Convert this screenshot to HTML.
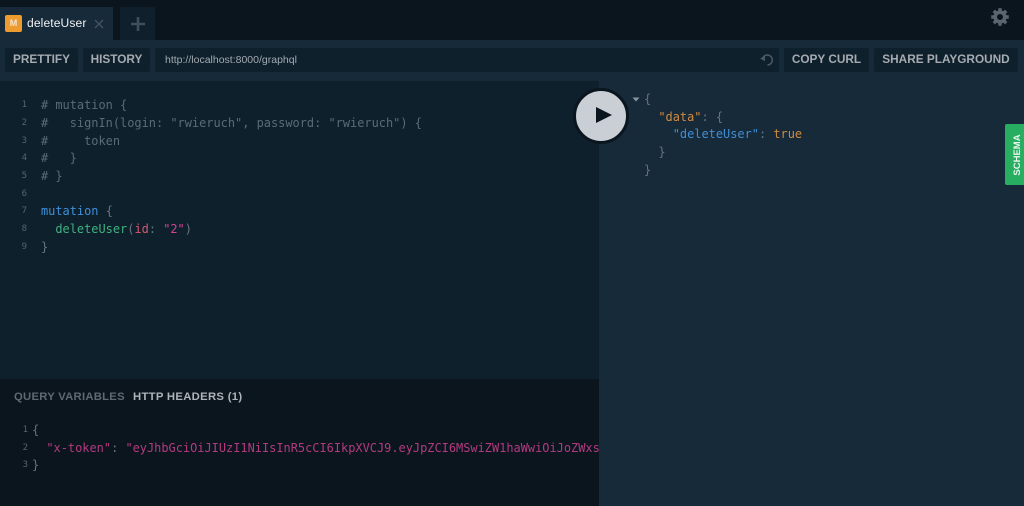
<!DOCTYPE html>
<html>
<head>
<meta charset="utf-8">
<style>
html,body{margin:0;padding:0;width:1024px;height:506px;overflow:hidden;background:#172a3a}
body{position:relative;font-family:"Liberation Sans",sans-serif}
.a{position:absolute}
.btn{position:absolute;top:48px;height:24px;background:#0f202d;border-radius:2px;color:#a5abb0;font-weight:700;font-size:11.8px;line-height:23px;text-align:center;white-space:nowrap}
.code{position:absolute;font-family:"DejaVu Sans Mono","Liberation Mono",monospace;font-size:11.95px;line-height:17.65px;white-space:pre;color:#6e7c87}
.ln{position:absolute;font-family:"DejaVu Sans Mono","Liberation Mono",monospace;font-size:9px;line-height:17.65px;color:#56636d;text-align:right;white-space:pre}
.c{color:#5a6b77}
.kw{color:#3f8fd6}
.fn{color:#3fb27f}
.at{color:#d6566e}
.st{color:#d64292}
.br{color:#66747f}
</style>
</head>
<body>
<!-- top bar -->
<div class="a" style="left:0;top:0;width:1024px;height:40px;background:#0b151e"></div>
<div class="a" style="left:0;top:7px;width:113px;height:33px;background:#172a3a"></div>
<div class="a" style="left:120px;top:7px;width:35px;height:33px;background:#0f1f2c"></div>
<div class="a" style="left:5px;top:15px;width:17px;height:17px;background:#ed9a2f;border-radius:2px;color:#f5e6cf;font-size:9px;font-weight:700;line-height:17px;text-align:center">M</div>
<div class="a" style="left:27px;top:15px;color:#eef1f3;font-size:12.1px;line-height:17px;letter-spacing:.1px">deleteUser</div>
<svg class="a" style="left:93px;top:18px" width="12" height="12" viewBox="0 0 12 12"><path d="M2 2L10 10M10 2L2 10" stroke="#46545f" stroke-width="1.3" fill="none"/></svg>
<svg class="a" style="left:130px;top:16px" width="16" height="16" viewBox="0 0 16 16"><path d="M8 1V15M1 8H15" stroke="#3f4e5a" stroke-width="2.6" fill="none"/></svg>
<!-- gear -->
<svg class="a" style="left:990px;top:7px" width="20" height="20" viewBox="0 0 20 20">
<g fill="#5a6570"><circle cx="10" cy="10" r="6.6"/>
<g stroke="#5a6570" stroke-width="3.4"><path d="M10 1.2V18.8"/><path d="M1.2 10H18.8"/><path d="M3.8 3.8L16.2 16.2"/><path d="M16.2 3.8L3.8 16.2"/></g></g>
<circle cx="10" cy="10" r="3" fill="#0b151e"/></svg>

<!-- toolbar -->
<div class="btn" style="left:5px;width:73px">PRETTIFY</div>
<div class="btn" style="left:83px;width:67px">HISTORY</div>
<div class="a" style="left:155px;top:48px;width:624px;height:24px;background:#0f202d;border-radius:2px"></div>
<div class="a" style="left:165px;top:48px;color:#a3aab0;font-size:10.5px;line-height:24px;">http://localhost:8000/graphql</div>
<svg class="a" style="left:759px;top:52px" width="16" height="16" viewBox="0 0 16 16"><path d="M3.4 7.2A5 5 0 1 1 8.5 13" stroke="#4d5a65" stroke-width="1.5" fill="none"/><path d="M1 6.5L6 4.2V9.2Z" fill="#4d5a65"/></svg>
<div class="btn" style="left:784px;width:85px">COPY CURL</div>
<div class="btn" style="left:874px;width:144px">SHARE PLAYGROUND</div>

<!-- editor left -->
<div class="a" style="left:0;top:81px;width:599px;height:298px;background:#0f202d"></div>
<div class="a" style="left:0;top:379px;width:599px;height:127px;background:#0b151e"></div>
<!-- right pane separator shading -->
<div class="a" style="left:599px;top:81px;width:425px;height:425px;background:#172a3a"></div>

<div class="ln" style="left:10px;top:97.4px;width:17px">1
2
3
4
5
6
7
8
9</div>
<div class="code" style="left:41px;top:97.4px"><span class="c"># mutation {
#   signIn(login: "rwieruch", password: "rwieruch") {
#     token
#   }
# }</span>

<span class="kw">mutation</span> <span class="br">{</span>
  <span class="fn">deleteUser</span><span class="br">(</span><span class="at">id</span><span class="br">:</span> <span class="st">"2"</span><span class="br">)</span>
<span class="br">}</span></div>

<!-- play button -->
<div class="a" style="left:573px;top:88px;width:50px;height:50px;border:3px solid #0b151e;border-radius:50%;background:#c9cfd5;box-sizing:content-box"></div>
<svg class="a" style="left:596px;top:107px" width="16" height="16" viewBox="0 0 16 16"><path d="M0 0L16 8L0 16Z" fill="#0b151e"/></svg>

<!-- result -->
<svg class="a" style="left:632px;top:97px" width="8" height="6" viewBox="0 0 8 6"><path d="M0.5 0.5H7.5L4 4.5Z" fill="#8a949c"/></svg>
<div class="code" style="left:644px;top:91px"><span class="br">{</span>
  <span style="color:#d18a3f">"data"</span><span class="br">: {</span>
    <span style="color:#3f8fd6">"deleteUser"</span><span class="br">:</span> <span style="color:#d18a3f">true</span>
  <span class="br">}</span>
<span class="br">}</span></div>

<!-- schema tab -->
<div class="a" style="left:1005px;top:124px;width:19px;height:61px;background:#27ae60;border-radius:2px 0 0 2px"></div>
<div class="a" style="left:988px;top:147px;width:60px;height:16px;line-height:16px;text-align:center;color:#e8f6ee;font-size:9.5px;font-weight:700;transform:rotate(-90deg)">SCHEMA</div>

<!-- bottom tabs -->
<div class="a" style="left:14px;top:389px;color:#5e6972;font-size:11.3px;font-weight:700;line-height:16px;letter-spacing:.25px;white-space:nowrap">QUERY VARIABLES</div>
<div class="a" style="left:133px;top:389px;color:#aeb4b9;font-size:11.3px;font-weight:700;line-height:16px;letter-spacing:.3px;white-space:nowrap">HTTP HEADERS (1)</div>

<div class="ln" style="left:14px;top:422px;width:14px">1
2
3</div>
<div class="a" style="left:32px;top:422px;width:567px;height:60px;overflow:hidden">
<div class="code" style="left:0;top:0"><span class="br">{</span>
  <span class="st" style="color:#b33a80">"x-token"</span><span class="br">:</span> <span class="st" style="color:#b33a80">"eyJhbGciOiJIUzI1NiIsInR5cCI6IkpXVCJ9.eyJpZCI6MSwiZW1haWwiOiJoZWxsbyIsInVzZXJuYW1lIjoicndpZXJ1Y2gifQ"</span>
<span class="br">}</span></div>
</div>
</body>
</html>
